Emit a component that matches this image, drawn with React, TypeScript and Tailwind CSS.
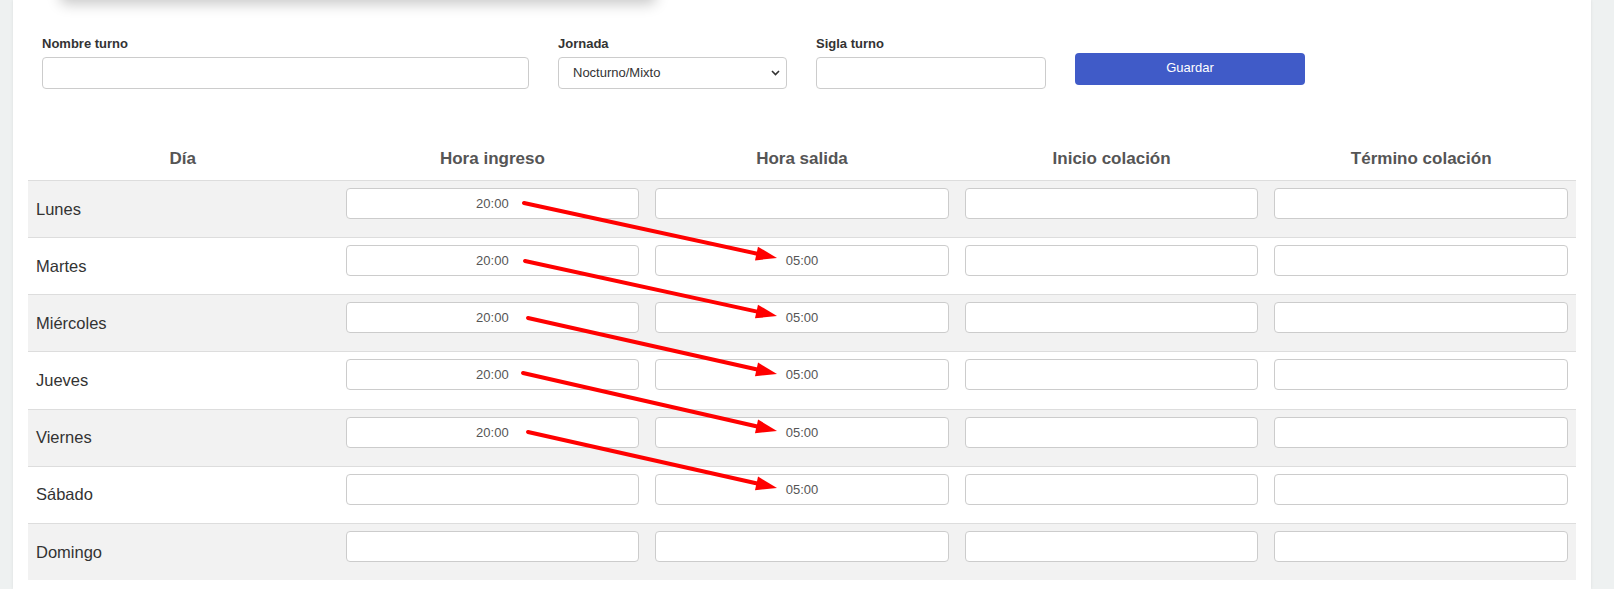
import React from 'react'

const days = ['Lunes', 'Martes', 'Miércoles', 'Jueves', 'Viernes', 'Sábado', 'Domingo']
const headers = ['Día', 'Hora ingreso', 'Hora salida', 'Inicio colación', 'Término colación']

// entrada / salida por día (índice de fila)
const ingreso: Record<number, string> = { 0: '20:00', 1: '20:00', 2: '20:00', 3: '20:00', 4: '20:00' }
const salida: Record<number, string> = { 1: '05:00', 2: '05:00', 3: '05:00', 4: '05:00', 5: '05:00' }

// flechas rojas dibujadas encima de la tabla (coordenadas de página)
const arrows = [
  { x1: 524, y1: 203, x2: 777, y2: 258 },
  { x1: 525, y1: 261, x2: 777, y2: 316 },
  { x1: 528, y1: 318, x2: 777, y2: 374 },
  { x1: 523, y1: 373, x2: 777, y2: 431 },
  { x1: 528, y1: 432, x2: 777, y2: 488 },
]

function Arrow({ x1, y1, x2, y2 }: { x1: number; y1: number; x2: number; y2: number }) {
  const len = Math.hypot(x2 - x1, y2 - y1)
  const dx = (x2 - x1) / len
  const dy = (y2 - y1) / len
  const head = 21
  const half = 7
  const bx = x2 - dx * head
  const by = y2 - dy * head
  const pts = `${x2},${y2} ${bx - dy * half},${by + dx * half} ${bx + dy * half},${by - dx * half}`
  return (
    <g>
      <line x1={x1} y1={y1} x2={bx + dx * 3} y2={by + dy * 3} stroke="#ff0000" strokeWidth={4} strokeLinecap="round" />
      <polygon points={pts} fill="#ff0000" />
    </g>
  )
}

function TimeInput({ value }: { value?: string }) {
  return (
    <div className="h-[31px] w-full rounded-[4px] border border-[#ccc] bg-white text-center text-[13px] leading-[29px] text-[#555]">
      {value ?? ''}
    </div>
  )
}

export default function App() {
  return (
    <div className="relative h-[589px] w-[1614px] overflow-hidden bg-[#eef1f1] font-['Liberation_Sans',Arial,sans-serif]">
      <div className="ml-[13px] h-full w-[1578px] bg-white px-[15px] shadow-[0_0_3px_rgba(0,0,0,0.08)]">
        {/* formulario */}
        <div className="flex gap-[29px] pl-[14px] pt-[35px]">
          <div className="w-[487px]">
            <label className="block text-[13px] font-bold leading-[18px] text-[#333]">Nombre turno</label>
            <input className="mt-[4px] h-[32px] w-full rounded-[4px] border border-[#ccc] bg-white px-3 text-[13px] outline-none" />
          </div>
          <div className="w-[229px]">
            <label className="block text-[13px] font-bold leading-[18px] text-[#333]">Jornada</label>
            <div className="relative mt-[4px] h-[32px] w-full rounded-[4px] border border-[#ccc] bg-white pl-[14px] text-[13px] leading-[30px] text-[#333]">
              Nocturno/Mixto
              <svg className="absolute right-[6px] top-[12px]" width="9" height="6" viewBox="0 0 9 6">
                <path d="M1 1l3.5 3.5L8 1" fill="none" stroke="#333" strokeWidth="1.6" />
              </svg>
            </div>
          </div>
          <div className="w-[230px]">
            <label className="block text-[13px] font-bold leading-[18px] text-[#333]">Sigla turno</label>
            <input className="mt-[4px] h-[32px] w-full rounded-[4px] border border-[#ccc] bg-white px-3 text-[13px] outline-none" />
          </div>
          <div className="w-[230px] pt-[18px]">
            <button className="h-[32px] w-full rounded-[4px] bg-[#405bc8] pb-[3px] text-[13px] leading-[18px] text-white">
              Guardar
            </button>
          </div>
        </div>

        {/* tabla de horarios */}
        <div className="mt-[49px]">
          <div className="grid h-[42px] grid-cols-5 items-center">
            {headers.map((h) => (
              <div key={h} className="text-center text-[17px] font-bold text-[#555]">
                {h}
              </div>
            ))}
          </div>
          {days.map((d, i) => (
            <div
              key={d}
              className={`grid h-[57.15px] grid-cols-5 border-t border-[#ddd] ${i % 2 === 0 ? 'bg-[#f2f2f2]' : 'bg-white'}`}
            >
              <div className="flex items-center pl-[8px] text-[16.5px] text-[#333]">{d}</div>
              <div className="px-[8px] pt-[7px]">
                <TimeInput value={ingreso[i]} />
              </div>
              <div className="px-[8px] pt-[7px]">
                <TimeInput value={salida[i]} />
              </div>
              <div className="px-[8px] pt-[7px]">
                <TimeInput />
              </div>
              <div className="px-[8px] pt-[7px]">
                <TimeInput />
              </div>
            </div>
          ))}
        </div>
      </div>

      {/* sombra del panel superior que queda fuera de vista */}
      <div className="absolute left-[60px] top-[-40px] h-[40px] w-[596px] rounded-[6px] bg-white shadow-[0_4px_14px_rgba(0,0,0,0.22)]" />

      <svg className="pointer-events-none absolute left-0 top-0" width="1614" height="589">
        {arrows.map((a, i) => (
          <Arrow key={i} {...a} />
        ))}
      </svg>
    </div>
  )
}
